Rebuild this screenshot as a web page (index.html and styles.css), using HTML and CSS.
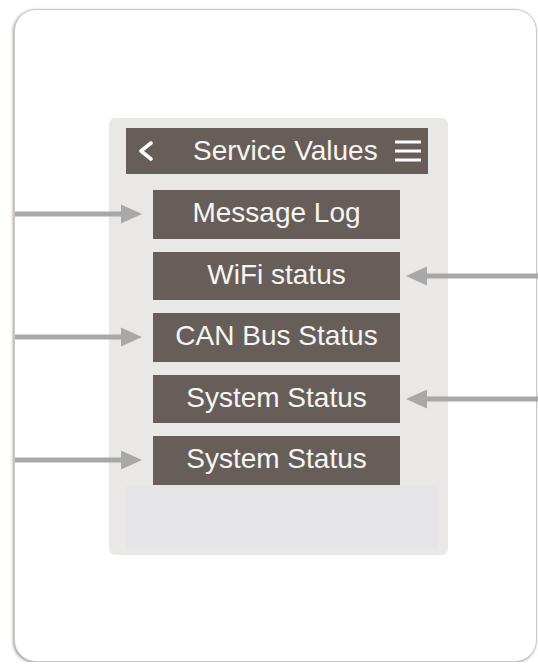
FILE: index.html
```html
<!DOCTYPE html>
<html lang="en">
<head>
    <meta charset="UTF-8">
    <title>Service Values</title>
    <link rel="stylesheet" href="styles.css">
</head>
<body>

    <!-- device frame -->
    <div class="frame">
        <div class="panel">

            <!-- title bar -->
            <div class="titlebar">
                <svg class="back" width="16" height="20" viewBox="0 0 16 20">
                    <polyline points="13,2 3,10 13,18" fill="none" stroke="#fff" stroke-width="3.6" stroke-linecap="round" stroke-linejoin="round"/>
                </svg>
                <span class="title">Service Values</span>
                <svg class="menu" width="28" height="24" viewBox="0 0 28 24">
                    <rect x="1" y="1.5" width="26" height="3" fill="#fff"/>
                    <rect x="1" y="10.5" width="26" height="3" fill="#fff"/>
                    <rect x="1" y="19.5" width="26" height="3" fill="#fff"/>
                </svg>
            </div>

            <!-- menu entries -->
            <div class="list">
                <div class="item">Message Log
                    <svg class="arrow in-left" width="127" height="20" viewBox="0 0 127 20"><rect x="0" y="7.5" width="108" height="5"/><polygon points="106,0.5 127,10 106,19.5"/></svg>
                </div>
                <div class="item">WiFi status
                    <svg class="arrow in-right" width="133" height="20" viewBox="0 0 133 20"><rect x="19" y="7.5" width="114" height="5"/><polygon points="0,10 21,0.5 21,19.5"/></svg>
                </div>
                <div class="item">CAN Bus Status
                    <svg class="arrow in-left" width="127" height="20" viewBox="0 0 127 20"><rect x="0" y="7.5" width="108" height="5"/><polygon points="106,0.5 127,10 106,19.5"/></svg>
                </div>
                <div class="item">System Status
                    <svg class="arrow in-right" width="133" height="20" viewBox="0 0 133 20"><rect x="19" y="7.5" width="114" height="5"/><polygon points="0,10 21,0.5 21,19.5"/></svg>
                </div>
                <div class="item">System Status
                    <svg class="arrow in-left" width="127" height="20" viewBox="0 0 127 20"><rect x="0" y="7.5" width="108" height="5"/><polygon points="106,0.5 127,10 106,19.5"/></svg>
                </div>
                <div class="filler"></div>
            </div>

        </div>
    </div>

</body>
</html>
```

FILE: styles.css
```css
body {
    margin: 0;
    background: #fff;
    font-family: "Liberation Sans", Arial, sans-serif;
    overflow: hidden;
}
.frame {
    margin: 9px 0 0 14px;
    width: 523px;
    height: 653px;
    box-sizing: border-box;
    padding: 108px 0 0 94px;
    background: #fff;
    border: 1px solid #cdc8c4;
    border-radius: 22px;
    box-shadow: -1px 1px 3px rgba(90, 75, 65, 0.55);
}
.panel {
    width: 339px;
    height: 437px;
    box-sizing: border-box;
    padding: 10px 20px 7px 17px;
    background: #e9e8e6;
    border-radius: 6px;
    display: flex;
    flex-direction: column;
}
.titlebar {
    height: 46px;
    flex: none;
    display: flex;
    align-items: center;
    padding: 0 6px 0 12px;
    background: #675e59;
    color: #f7f5f3;
}
.back {
    flex: none;
}
.title {
    margin-left: 39px;
    font-size: 28px;
    white-space: nowrap;
}
.menu {
    flex: none;
    margin-left: auto;
}
.list {
    flex: 1;
    display: flex;
    flex-direction: column;
    gap: 13px;
    padding-top: 16px;
    margin-right: -10px;
}
.item {
    position: relative;
    margin-left: 27px;
    width: 247px;
    height: 48.5px;
    flex: none;
    display: flex;
    align-items: center;
    justify-content: center;
    padding-bottom: 2px;
    box-sizing: border-box;
    background: #675e59;
    color: #f7f5f3;
    font-size: 28px;
    white-space: nowrap;
}
.filler {
    flex: 1;
    margin-top: -13px;
    background: #e5e5e7;
}
.arrow {
    position: absolute;
    top: 50%;
    transform: translateY(-50%);
    fill: #a8a8a8;
}
.in-left {
    right: calc(100% + 11px);
}
.in-right {
    left: calc(100% + 6px);
}
```
